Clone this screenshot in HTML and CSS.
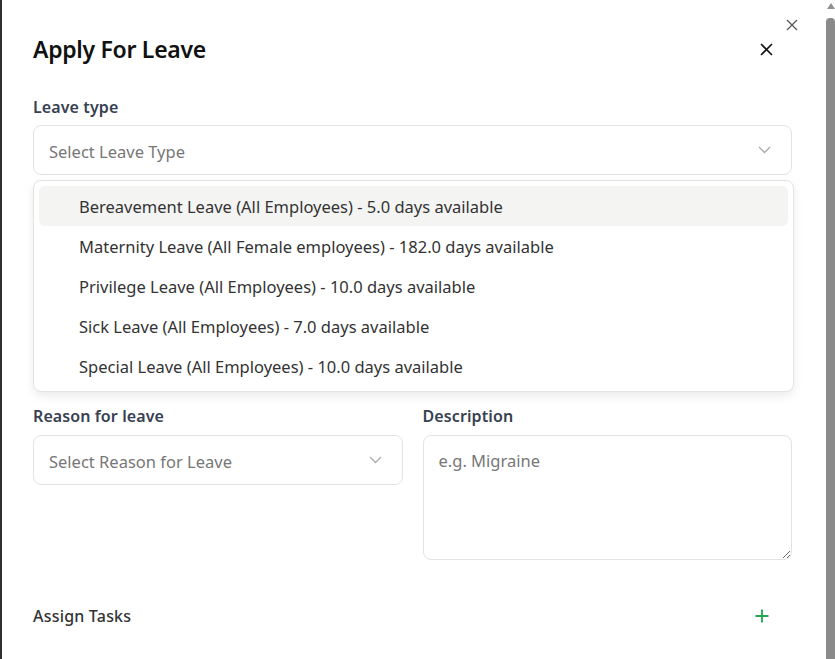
FILE: index.html
```html
<!DOCTYPE html>
<html lang="en">
<head>
<meta charset="utf-8">
<title>Apply For Leave</title>
<link rel="stylesheet" href="styles.css">
</head>
<body>
<div class="screen">
  <div class="backdrop-edge"></div>
  <div class="modal">
    <button class="outer-close" aria-label="Close">
      <svg width="12" height="12" viewBox="0 0 12 12"><path d="M1 1L11 11M11 1L1 11" stroke="#555" stroke-width="1.3" fill="none"/></svg>
    </button>
    <div class="modal-header">
      <h1 class="modal-title">Apply For Leave</h1>
      <button class="close-btn" aria-label="Close">
        <svg width="13" height="13" viewBox="0 0 13 13"><path d="M1 1L12 12M12 1L1 12" stroke="#111" stroke-width="1.6" fill="none"/></svg>
      </button>
    </div>

    <div class="field leave-type">
      <label class="label">Leave type</label>
      <div class="select">
        <span class="placeholder">Select Leave Type</span>
        <svg class="chev" width="13" height="8" viewBox="0 0 13 8"><path d="M1 1L6.5 6.5L12 1" stroke="#aaa" stroke-width="1.3" fill="none"/></svg>
      </div>
      <ul class="menu">
        <li class="menu-item active">Bereavement Leave (All Employees) - 5.0 days available</li>
        <li class="menu-item">Maternity Leave (All Female employees) - 182.0 days available</li>
        <li class="menu-item">Privilege Leave (All Employees) - 10.0 days available</li>
        <li class="menu-item">Sick Leave (All Employees) - 7.0 days available</li>
        <li class="menu-item">Special Leave (All Employees) - 10.0 days available</li>
      </ul>
    </div>

    <div class="covered-row"></div>

    <div class="two-col">
      <div class="field">
        <label class="label">Reason for leave</label>
        <div class="select">
          <span class="placeholder">Select Reason for Leave</span>
          <svg class="chev" width="13" height="8" viewBox="0 0 13 8"><path d="M1 1L6.5 6.5L12 1" stroke="#aaa" stroke-width="1.3" fill="none"/></svg>
        </div>
      </div>
      <div class="field">
        <label class="label">Description</label>
        <textarea class="textarea" placeholder="e.g. Migraine"></textarea>
      </div>
    </div>

    <div class="tasks-row">
      <span class="tasks-title">Assign Tasks</span>
      <button class="add-btn" aria-label="Add task">
        <svg width="14" height="14" viewBox="0 0 14 14"><path d="M7 0.5V13.5M0.5 7H13.5" stroke="#22a553" stroke-width="1.8" fill="none"/></svg>
      </button>
    </div>
  </div>
  <div class="scrollbar">
    <div class="sb-arrow"></div>
    <div class="sb-thumb"></div>
  </div>
</div>
</body>
</html>
```

FILE: styles.css
```css
* { box-sizing: border-box; }
html, body { margin: 0; padding: 0; height: 100%; }
body {
  font-family: "Noto Sans", "Open Sans", sans-serif;
  background: #fff;
  overflow: hidden;
}
.screen {
  display: flex;
  height: 659px;
  width: 835px;
}
.backdrop-edge {
  width: 2px;
  background: #2f2f2f;
  flex: none;
}
.modal {
  position: relative;
  flex: 1;
  background: #fff;
  padding: 33px 34px 0 31px;
}
.outer-close {
  position: absolute;
  top: 19px;
  left: 784px;
  width: 12px;
  height: 12px;
  padding: 0;
  border: 0;
  background: none;
  display: flex;
}
.modal-header {
  display: flex;
  align-items: center;
  justify-content: space-between;
  height: 32px;
}
.modal-title {
  margin: 0;
  font-size: 23px;
  line-height: 32px;
  font-weight: 600;
  color: #111;
  letter-spacing: -0.3px;
}
.close-btn {
  border: 0;
  background: none;
  padding: 0;
  width: 13px;
  height: 13px;
  margin-right: 19px;
  display: flex;
}
.field {
  display: flex;
  flex-direction: column;
}
.leave-type {
  position: relative;
  margin-top: 30px;
}
.label {
  font-size: 16px;
  line-height: 24px;
  font-weight: 600;
  color: #374151;
  margin-bottom: 6px;
  letter-spacing: 0.1px;
}
.select {
  height: 50px;
  border: 1px solid #e3e3e3;
  border-radius: 8px;
  display: flex;
  align-items: center;
  justify-content: space-between;
  padding: 0 20px 0 15px;
}
.placeholder {
  font-size: 16.5px;
  color: #777;
  padding-top: 2px;
}
.chev { flex: none; }
.menu {
  position: absolute;
  left: 0;
  top: 85px;
  width: 761px;
  margin: 0;
  padding: 5px;
  list-style: none;
  background: #fff;
  border: 1px solid #e3e3e3;
  border-radius: 8px;
  box-shadow: 0 4px 10px rgba(0,0,0,0.08);
  z-index: 5;
}
.menu-item {
  height: 40px;
  line-height: 38px;
  padding-top: 2px;
  padding-left: 40px;
  font-size: 16.5px;
  color: #333;
  border-radius: 6px;
  white-space: nowrap;
}
.menu-item.active { background: #f4f4f3; }
.covered-row { height: 229px; }
.two-col {
  display: grid;
  grid-template-columns: 1fr 1fr;
  column-gap: 20px;
}
.two-col .label { margin-bottom: 7px; }
.textarea {
  height: 125px;
  border: 1px solid #e3e3e3;
  border-radius: 8px;
  padding: 13px 15px;
  font-family: inherit;
  font-size: 16.5px;
  color: #333;
  resize: vertical;
  outline: none;
}
.textarea::placeholder { color: #777; }
.tasks-row {
  margin-top: 44px;
  display: flex;
  align-items: center;
  justify-content: space-between;
  height: 24px;
}
.tasks-title {
  font-size: 16px;
  font-weight: 500;
  color: #333;
  letter-spacing: 0.2px;
}
.add-btn {
  border: 0;
  background: none;
  padding: 0;
  width: 14px;
  height: 14px;
  margin-right: 23px;
  display: flex;
}
.scrollbar {
  width: 9px;
  flex: none;
  display: flex;
  flex-direction: column;
  align-items: center;
  background: #fff;
}
.sb-arrow {
  margin-top: 3px;
  width: 0;
  height: 0;
  border-left: 4.5px solid transparent;
  border-right: 4.5px solid transparent;
  border-bottom: 6px solid #909090;
}
.sb-thumb {
  margin-top: 9px;
  width: 9px;
  flex: 1;
  background: #8a8a8a;
  border-radius: 4px 4px 0 0;
}
```
